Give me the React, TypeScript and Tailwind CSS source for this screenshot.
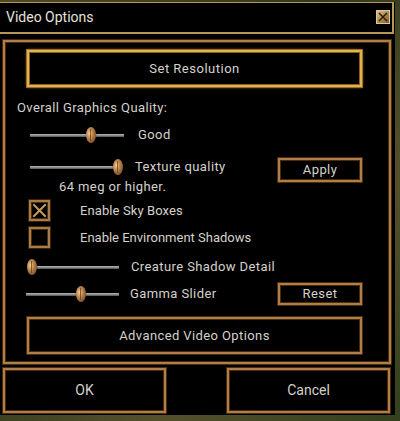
import React from "react";

function Thumb({ left }: { left: number }) {
  return (
    <div
      className="absolute top-[2px] w-[10px] h-[16px] rounded-[50%] bg-[radial-gradient(ellipse_at_35%_40%,#f0d0a0_0%,#c08850_35%,#7a4a20_80%,#4a2a10_100%)] shadow-[0_0_1px_#000]"
      style={{ left: left - 5 }}
    >
      <div className="absolute left-[4px] top-[2px] w-[1px] h-[12px] bg-[#5a3818] opacity-70" />
    </div>
  );
}

function Slider({ className, thumb }: { className: string; thumb: number }) {
  return (
    <div className={"relative h-[20px] flex items-center shrink-0 " + className}>
      <div className="w-full h-[3px] bg-[linear-gradient(#b8b8b8,#808080_60%,#505050)]" />
      <Thumb left={thumb} />
    </div>
  );
}

function Check({ checked }: { checked: boolean }) {
  return (
    <div className="w-[21px] h-[21px] border-2 border-[#a87c44] shadow-[inset_0_0_0_1px_#4a2e12,0_0_0_1px_#3a2410] flex items-center justify-center shrink-0">
      {checked && (
        <svg width="15" height="15" viewBox="0 0 15 15">
          <path d="M2 2 L13 13 M13 2 L2 13" stroke="#c89a5c" strokeWidth="2" strokeLinecap="square" />
        </svg>
      )}
    </div>
  );
}

const frame =
  "border-2 border-[#b07e46] shadow-[0_0_0_1px_#4a2c10,inset_0_0_0_1px_#4a2c10]";

export default function App() {
  return (
    <div className="w-[400px] h-[421px] overflow-hidden pt-[2px] bg-[#3b4322] bg-[linear-gradient(135deg,#4a4a26,#2f3a1c_40%,#55502c_70%,#33401e)] font-[family-name:Roboto,sans-serif] text-[#d4d2ca]">
      <div className="w-[395px] h-[413px] bg-black flex flex-col">
        {/* title bar */}
        <div className="w-[394px] h-[32px] border-t border-r-2 border-b-2 border-[#b89658] flex items-center justify-between pl-[6px] pr-[2px] pb-[1px]">
          <span className="text-[14px] text-[#e4e2dc]">Video Options</span>
          <div className="w-[14px] h-[14px] border border-[#e0c890] bg-[linear-gradient(135deg,#dcc088,#a8844c_60%,#7a5a30)] flex items-center justify-center">
            <svg width="10" height="10" viewBox="0 0 10 10">
              <path d="M1 1 L9 9 M9 1 L1 9" stroke="#2a2010" strokeWidth="1.6" />
            </svg>
          </div>
        </div>

        {/* main panel */}
        <div className={"mt-[6px] ml-[3px] w-[388px] h-[324px] flex flex-col " + frame}>
          <div className="mt-[8px] ml-[22px] w-[335px] h-[37px] shrink-0 border-2 border-[#e0b448] shadow-[0_0_0_1px_#9a6c30,inset_0_0_0_1px_#8a5e26,0_0_3px_#c89040] flex items-center justify-center text-[13px] tracking-[0.5px]">
            Set Resolution
          </div>

          <div className="mt-[13px] ml-[12px] h-[16px] leading-[16px] text-[13px] tracking-[0.4px]">
            Overall Graphics Quality:
          </div>

          <div className="mt-[9px] flex items-center h-[20px]">
            <Slider className="ml-[25px] w-[94px]" thumb={61} />
            <span className="ml-[14px] text-[13px] tracking-[0.4px]">Good</span>
          </div>

          <div className="mt-[12px] flex items-start">
            <div className="flex flex-col">
              <div className="flex items-center h-[20px]">
                <Slider className="ml-[25px] w-[90px]" thumb={88} />
                <span className="ml-[15px] text-[13px] tracking-[0.4px]">Texture quality</span>
              </div>
              <div className="mt-[2px] ml-[54px] h-[16px] leading-[16px] text-[13px] tracking-[0.4px]">
                64 meg or higher.
              </div>
            </div>
            <div className={"ml-auto mr-[27px] mt-[1px] w-[84px] h-[24px] flex items-center justify-center text-[13px] tracking-[0.4px] " + frame}>
              Apply
            </div>
          </div>

          <div className="mt-[5px] ml-[24px] flex items-center">
            <Check checked />
            <span className="ml-[30px] text-[13px] tracking-[0.1px]">Enable Sky Boxes</span>
          </div>

          <div className="mt-[6px] ml-[24px] flex items-center">
            <Check checked={false} />
            <span className="ml-[30px] text-[13px]">Enable Environment Shadows</span>
          </div>

          <div className="mt-[9px] flex items-center h-[20px]">
            <Slider className="ml-[25px] w-[89px]" thumb={2} />
            <span className="ml-[12px] text-[13px] tracking-[0.4px]">Creature Shadow Detail</span>
          </div>

          <div className="mt-[6px] flex items-center h-[22px]">
            <Slider className="ml-[21px] w-[93px]" thumb={55} />
            <span className="ml-[11px] text-[13px] tracking-[0.4px]">Gamma Slider</span>
            <div className={"ml-auto mr-[27px] w-[84px] h-[22px] flex items-center justify-center text-[13px] tracking-[0.4px] " + frame}>
              Reset
            </div>
          </div>

          <div className={"mt-[12px] ml-[22px] w-[335px] h-[37px] shrink-0 flex items-center justify-center text-[13px] tracking-[0.4px] " + frame}>
            Advanced Video Options
          </div>
        </div>

        {/* bottom buttons */}
        <div className="mt-[4px] flex h-[45px]">
          <div className={"ml-[3px] w-[163px] h-[45px] flex items-center justify-center text-[14px] " + frame}>
            OK
          </div>
          <div className={"ml-[61px] w-[163px] h-[45px] flex items-center justify-center text-[14px] " + frame}>
            Cancel
          </div>
        </div>
      </div>
    </div>
  );
}
